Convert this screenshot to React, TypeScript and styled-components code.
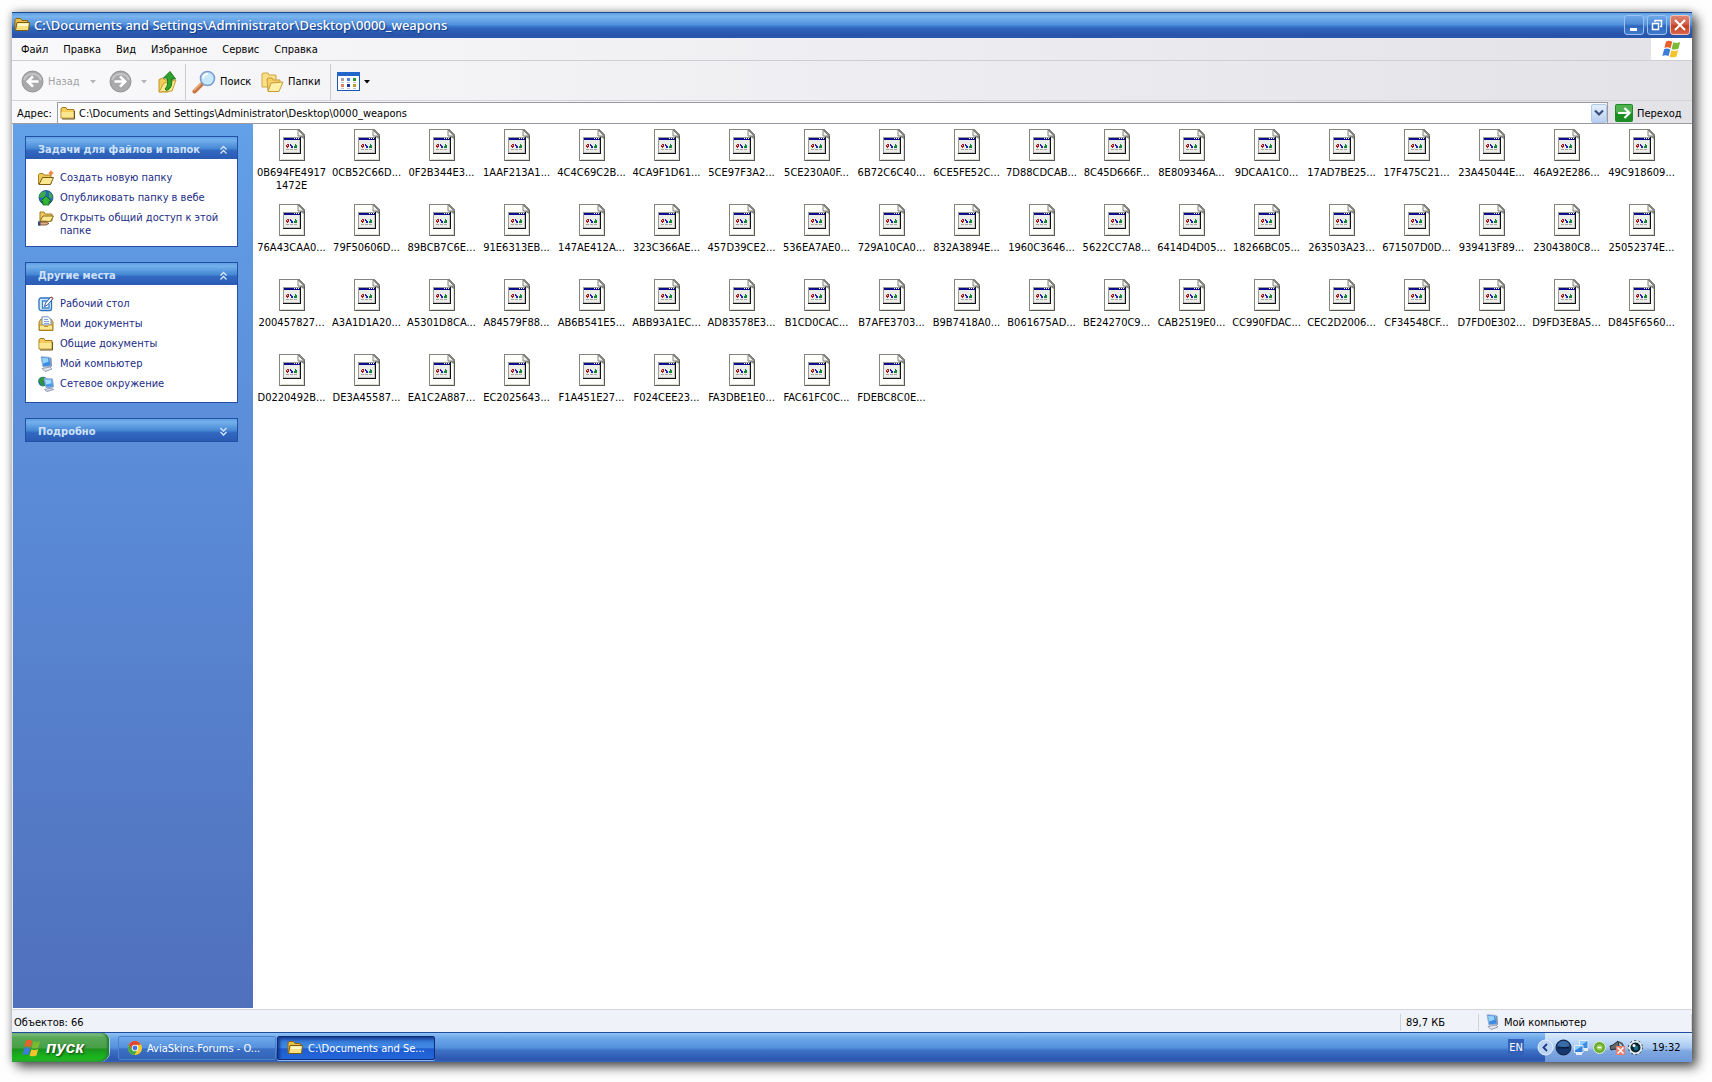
import React from "react";
import styled, { createGlobalStyle } from "styled-components";

const ui = `"DejaVu Sans Condensed", "Noto Sans", sans-serif`;

const GlobalStyle = createGlobalStyle`
  * { box-sizing: border-box; }
  body { margin: 0; background: #fefefe; color: #000; font: 11px/13px ${ui}; }
  button, input { font: inherit; color: inherit; border: 0; padding: 0; background: none; }
  button { cursor: pointer; white-space: nowrap; }
  ul { list-style: none; margin: 0; padding: 0; }
  svg { display: block; flex: none; }
`;

const Page = styled.div`
  min-height: 100vh;
  display: flex;
  padding: 12px 20px 20px 12px;
`;

const Screen = styled.div`
  flex: 1;
  min-width: 0;
  display: flex;
  flex-direction: column;
  background: #fff;
  box-shadow: 0 0 8px rgba(0, 0, 0, 0.3), 5px 5px 11px rgba(0, 0, 0, 0.65);
`;

const TitleBar = styled.header`
  display: flex;
  align-items: center;
  gap: 4px;
  height: 26px;
  padding: 0 2px 2px;
  border-top: 1px solid #1c4a94;
  background: linear-gradient(#5e9fe2 0%, #7ab4ee 14%, #5090dc 48%, #3c7acc 52%, #2f65bc 62%, #2853a8 90%, #2a58ae 100%);
`;

const Title = styled.h1`
  flex: 1;
  min-width: 0;
  margin: 0;
  overflow: hidden;
  white-space: nowrap;
  color: #fff;
  font: 500 13px/20px "Noto Sans", sans-serif;
  text-shadow: 1px 1px 1px #123a86;
`;

const Caption = styled.div`
  display: flex;
  gap: 3px;
`;

const CaptionButton = styled.button<{ $close?: boolean }>`
  display: grid;
  place-items: center;
  width: 20px;
  height: 20px;
  border: 1px solid ${(p) => (p.$close ? "#f2c3b8" : "#9cc2f0")};
  border-radius: 3px;
  background: ${(p) =>
    p.$close
      ? "linear-gradient(#dc8474, #d0604a 45%, #c04028 55%, #d8674c)"
      : "linear-gradient(#6fa8e8, #4c88d4 45%, #2f66bc 55%, #3f7acc)"};
`;

const MenuBar = styled.nav`
  display: flex;
  align-items: center;
  gap: 15px;
  height: 23px;
  padding-left: 9px;
  border-bottom: 1px solid #cfcfd3;
  background: linear-gradient(90deg, #f9f9fb, #e3e2e7);
`;

const MenuLogo = styled.div`
  display: grid;
  place-items: center;
  width: 41px;
  height: 22px;
  margin-left: auto;
  background: #fff;
`;

const ToolBar = styled.div`
  display: flex;
  align-items: center;
  height: 40px;
  padding: 3px 9px 1px;
  border-bottom: 1px solid #d4d4d8;
  background: linear-gradient(90deg, #f9f9fb, #e3e2e7);
`;

const Tool = styled.button<{ $w: number; $off?: boolean }>`
  display: flex;
  align-items: center;
  gap: 4px;
  width: ${(p) => p.$w}px;
  height: 32px;
  color: ${(p) => (p.$off ? "#a2a2a4" : "#000")};
`;

const Divider = styled.span`
  width: 1px;
  height: 36px;
  margin-right: 6px;
  background: #cbcbd0;
`;

const AddressBar = styled.form`
  display: flex;
  align-items: center;
  height: 23px;
  padding: 1px 0 0 5px;
  border-bottom: 1px solid #9a9aa2;
  background: linear-gradient(90deg, #f9f9fb, #e3e2e7);
`;

const AddressLabel = styled.label`
  width: 40px;
  padding-top: 2px;
  white-space: nowrap;
`;

const AddressBox = styled.div`
  flex: 1;
  display: flex;
  align-items: center;
  gap: 3px;
  height: 21px;
  padding: 0 0 0 2px;
  border: 1px solid #9a9aa2;
  border-bottom: 0;
  background: #fff;
`;

const AddressInput = styled.input`
  flex: 1;
  min-width: 0;
  padding-top: 1px;
  outline: 0;
`;

const DropButton = styled.button`
  display: grid;
  place-items: center;
  width: 16px;
  height: 19px;
  border: 1px solid #b2c8ea;
  border-radius: 2px;
  background: linear-gradient(#e4eefc, #b8cff0);
`;

const GoButton = styled.button`
  display: flex;
  align-items: center;
  gap: 4px;
  width: 84px;
  padding: 1px 0 0 7px;
`;

const Content = styled.div`
  flex: 1;
  display: flex;
  padding-bottom: 1px;
`;

const Sidebar = styled.aside`
  display: flex;
  flex-direction: column;
  gap: 15px;
  width: 241px;
  padding: 12px 15px 12px 12px;
  border-left: 1px solid #e6e9f0;
  background: linear-gradient(#62a0e8, #5b8cd8 38%, #5070bc);
`;

const Panel = styled.section`
  border: 1px solid #2450a4;
  background: #fff;
`;

const PanelHead = styled.button`
  display: flex;
  align-items: center;
  justify-content: space-between;
  width: 100%;
  height: 22px;
  padding: 3px 9px 0 12px;
  color: #cfe2fb;
  font-weight: bold;
  background: linear-gradient(#5c9fe4, #74b0ec 14%, #4688d4 52%, #3268c0 62%, #2b5bb4);
`;

const PanelList = styled.ul`
  && {
    display: flex;
    flex-direction: column;
    gap: 4px;
    padding: 11px 8px 10px 12px;
  }
`;

const PanelLink = styled.a`
  display: flex;
  gap: 6px;
  color: #1c2c86;
  text-decoration: none;
  svg { height: 16px; }
  span { padding-top: 1px; line-height: 13px; }
`;

const PanelItem = styled.li<{ $tall?: boolean }>`
  height: ${(p) => (p.$tall ? 26 : 16)}px;
`;

const Files = styled.ul`
  && {
    flex: 1;
    display: grid;
    grid-template-columns: repeat(auto-fill, 75px);
    grid-auto-rows: 75px;
    align-content: start;
    padding: 5px 0 0 1px;
  }
`;

const File = styled.li`
  display: flex;
  flex-direction: column;
  align-items: center;
  gap: 5px;
  text-align: center;
  white-space: pre;
`;

const StatusBar = styled.footer`
  display: flex;
  align-items: center;
  height: 23px;
  padding-top: 2px;
  border-top: 1px solid #d4d6da;
  background: #eff2f8;
`;

const StatusCell = styled.div<{ $w?: number }>`
  display: flex;
  align-items: center;
  gap: 4px;
  height: 17px;
  ${(p) => (p.$w ? `width: ${p.$w}px; padding-left: 5px;` : "flex: 1; padding-left: 2px;")}
  border-right: 1px solid #cfd2d8;
`;

const TaskBar = styled.div`
  display: flex;
  height: 30px;
  border-top: 1px solid #1f4c9c;
  background: linear-gradient(#8fc2f4, #6aa4e8 20%, #5592de 50%, #3d72c6 60%, #2c58b0 90%, #3464b8);
`;

const Start = styled.button`
  display: flex;
  align-items: center;
  gap: 4px;
  width: 97px;
  margin-right: 9px;
  padding-left: 10px;
  border-radius: 0 7px 10px 0;
  color: #fff;
  font: italic bold 17px/20px "Liberation Sans", sans-serif;
  text-shadow: 1px 1px 2px #104010;
  background: linear-gradient(#8cc48c, #58a858 15%, #48a048 50%, #1c9420 56%, #18b81c 85%, #30a830);
  box-shadow: inset -2px 0 2px #2a7a3a, 1px 0 0 #a8d4d0;
`;

const Task = styled.button<{ $active?: boolean }>`
  display: flex;
  align-items: center;
  gap: 5px;
  width: 158px;
  height: 24px;
  margin: 3px 1px 0 0;
  padding-left: 9px;
  border-radius: 2px;
  color: #fff;
  border: 1px solid ${(p) => (p.$active ? "#102c78" : "#4c82cc")};
  background: ${(p) =>
    p.$active
      ? "linear-gradient(#2c68c4, #3c82e0 30%, #4088e4 48%, #1e5cd0 54%, #2468dc)"
      : "linear-gradient(#70aaec, #5490dc 48%, #3a70c4 54%, #3464b8)"};
  ${(p) => p.$active && "box-shadow: inset 2px 2px 3px #163c94, 0 1px 0 #8cb8f0;"}
`;

const Lang = styled.button`
  align-self: center;
  width: 16px;
  height: 17px;
  margin: 0 12px 0 auto;
  color: #fff;
  background: #3360b8;
`;

const Tray = styled.div`
  display: flex;
  align-items: center;
  gap: 1px;
  width: 156px;
  padding-left: 1px;
  background: linear-gradient(#dcecfc, #bcd8f8 30%, #a8c8f0 50%, #80a8e0 62%, #6c98d8) no-repeat 9px 0;
`;

const Clock = styled.time`
  margin-left: 7px;
`;

type G = { w?: number; h?: number };

const FolderIcon = ({ w = 16, h = 16 }: G) => (
  <svg width={w} height={h} viewBox="0 0 16 16" aria-hidden="true">
    <path d="M1 12.500V3l1-1.500h4.500L8 3.500h5.500V6" fill="#e8be48" stroke="#8c6814" />
    <path d="M1.500 13.500 3 5.500h12.500l-1 8z" fill="#fbe080" stroke="#7c5c10" strokeLinejoin="round" />
    <path d="M4 6.500h10.500L14 9H3.500z" fill="#fff8cc" />
  </svg>
);

const SmallFolder = () => (
  <svg width="16" height="16" viewBox="0 0 16 16" aria-hidden="true">
    <path d="M1 13V4l1-1.500h4l1 2h7v8.500z" fill="#f4cc5c" stroke="#a87c1c" />
    <path d="M1.500 7h12v5.500h-12z" fill="#fbe690" />
    <path d="M14.500 6v8H2" fill="none" stroke="#6c5014" />
  </svg>
);

const Flag = ({ s }: { s: number }) => (
  <svg width={s} height={s} viewBox="0 0 20 20" aria-hidden="true">
    <path d="M4 2.500c2-1.200 4-1 6.200.2L8.600 9.300C6.500 8.200 4.500 8 2.400 9z" fill="#e8602c" />
    <path d="M11.200 3.300c2.200 1 4.400 1 7-.3l-1.700 6.600c-2.400 1.200-4.600 1.200-6.900.3z" fill="#7cba34" />
    <path d="M2.100 10.300c2.200-1.100 4.200-.8 6.200.3l-1.700 6.500c-2.100-1.200-4-1.300-6.200-.2z" fill="#3c7cdc" />
    <path d="M9.300 11.200c2.300 1 4.500.9 6.900-.3l-1.700 6.500c-2.300 1.200-4.700 1.200-6.900.3z" fill="#f4c42c" />
  </svg>
);

const Circle = ({ back }: { back?: boolean }) => (
  <svg width="23" height="23" viewBox="0 0 23 23" aria-hidden="true">
    <circle cx="11.500" cy="11.500" r="10.500" fill="#a9a9ab" stroke="#929294" />
    <path d="M3 10a9 9 0 0 1 17 0" fill="none" stroke="#c6c6c8" strokeWidth="2" />
    <path
      d={back ? "M17.500 11.500H7m5-5.200-5.200 5.200 5.200 5.200" : "M5.500 11.500H16m-5-5.200 5.200 5.200-5.200 5.200"}
      fill="none" stroke="#fff" strokeWidth="2.600"
    />
  </svg>
);

const Caret = ({ off }: { off?: boolean }) => (
  <svg width="6" height="4" viewBox="0 0 6 4" aria-hidden="true">
    <path d="M0 0h6L3 3.500z" fill={off ? "#b4b4b6" : "#000"} />
  </svg>
);

const UpIcon = () => (
  <svg width="22" height="24" viewBox="0 0 22 24" aria-hidden="true">
    <path d="M2 22V9.500L6 8l2 2 8-1v9L11 22z" fill="#f0cc58" stroke="#c09828" />
    <path d="M2 22 7 13l12-3-4 11z" fill="#fbe990" stroke="#c8a038" />
    <path d="M9.500 20.500c4-1.500 6-5 5-11.500h4L13 1.500 6.500 8H10c1 5 .8 8-2 11z" fill="#2ea42c" stroke="#187818" />
  </svg>
);

const SearchIcon = () => (
  <svg width="24" height="24" viewBox="0 0 24 24" aria-hidden="true">
    <path d="M2.500 21.500 10 14" stroke="#c87440" strokeWidth="4" strokeLinecap="round" />
    <path d="M2 20.500 9 13.500" stroke="#f0b080" strokeWidth="1.200" />
    <circle cx="15.500" cy="8.500" r="7" fill="#c8e8fc" stroke="#7c9cd0" strokeWidth="1.600" />
    <path d="M11 8a5 5 0 0 1 5-4" stroke="#fff" strokeWidth="2" fill="none" />
  </svg>
);

const FoldersIcon = () => (
  <svg width="23" height="22" viewBox="0 0 23 22" aria-hidden="true">
    <path d="M1 16V3l1-1h5l1 2h7v12z" fill="#fbe088" stroke="#d0a440" />
    <path d="M7 20 6 8l1-1h4l1 2h7v3" fill="#f4d068" stroke="#c89c38" />
    <path d="M7 20.500 10 12l12-1-4 9.500z" fill="#fdf0a8" stroke="#c89c38" />
  </svg>
);

const ViewsIcon = () => (
  <svg width="23" height="19" viewBox="0 0 23 19" aria-hidden="true">
    <rect x=".5" y=".5" width="22" height="18" fill="#fff" stroke="#1c58b8" />
    <path d="M0 0h23v4H0z" fill="#2266cc" />
    {["#a8a0a8", "#4c88d0", "#2c9438", "#e0805c", "#183c9c", "#c0a028"].map((c, i) => (
      <rect key={c} x={4 + (i % 3) * 6} y={i < 3 ? 6 : 12} width="3" height="3" fill={c} />
    ))}
    <path d="M4 10.500h3m3 0h3m3 0h3M4 16.500h3m3 0h3m3 0h3" stroke="#b8c4d4" />
  </svg>
);

const Chevrons = ({ down }: { down?: boolean }) => (
  <svg width="9" height="10" viewBox="0 0 9 10" aria-hidden="true">
    <path
      d={down ? "M1.500 1l3 3 3-3m-6 4 3 3 3-3" : "M1.500 4.500l3-3 3 3m-6 4 3-3 3 3"}
      fill="none" stroke="#d8e8fc" strokeWidth="1.300"
    />
  </svg>
);

const NewFolder = () => (
  <svg width="16" height="16" viewBox="0 0 16 16" aria-hidden="true">
    <path d="M.5 14V4.500l1-1H5l1 1.500h7v9z" fill="#ecc658" stroke="#a88020" />
    <path d="M1 14.500 4.500 7.500h11l-3 7z" fill="#fbe890" stroke="#7c5c18" />
    <path d="M13 0l.8 2.200L16 3l-2.200.8L13 6l-.8-2.200L10 3l2.200-.8z" fill="#f06020" />
    <circle cx="13" cy="3" r="1.800" fill="#f8803c" />
  </svg>
);

const WebIcon = () => (
  <svg width="16" height="16" viewBox="0 0 16 16" aria-hidden="true">
    <circle cx="8" cy="7.500" r="7" fill="#2468b8" stroke="#184878" strokeWidth=".8" />
    <path d="M2 4c2-3 5-3.500 6-2l-1 4-3 2-3-1zM11 2c3 1.500 4 4 3.500 7L11 7z" fill="#3cac48" />
    <path d="M8 6l5.500 5.500H11V15H5v-3.500H2.500z" fill="#34b434" stroke="#0c6c1c" strokeWidth=".8" />
  </svg>
);

const ShareIcon = () => (
  <svg width="16" height="16" viewBox="0 0 16 16" aria-hidden="true">
    <path d="M2 11V2h4l1 2h7v7z" fill="#f0cc60" stroke="#a07c20" />
    <path d="M2 11 5 6h10.500l-3 5.500z" fill="#fbe890" stroke="#8c6c20" />
    <path d="M0 12h8l3 1.500L8 15H0z" fill="#e8b080" stroke="#604020" strokeWidth=".8" />
    <path d="M0 11.500h2.500v4H0z" fill="#384878" />
  </svg>
);

const DesktopIcon = () => (
  <svg width="16" height="16" viewBox="0 0 16 16" aria-hidden="true">
    <rect x="1" y="2" width="12.500" height="12.500" rx="2" fill="#d4ecfc" stroke="#2c70c0" strokeWidth="1.300" />
    <path d="M10 5H4.500v7H11V8" fill="#fff" stroke="#3c84c8" strokeWidth="1.300" />
    <path d="M6.500 10.500 7.500 7l5.500-6 2 1.500-5.500 6.500z" fill="#fff" stroke="#2458a8" />
    <path d="m13 1 2 1.500" stroke="#e05028" strokeWidth="1.500" />
  </svg>
);

const DocsIcon = () => (
  <svg width="16" height="16" viewBox="0 0 16 16" aria-hidden="true">
    <path d="M1 14.500V6l2-3h10l2 3v8.500z" fill="#ecc458" stroke="#a88020" />
    <path d="M4 .8h6.500l2.500 3V9H4z" fill="#f4f9ff" stroke="#6c8cc0" strokeWidth=".9" />
    <path d="M6 3.500h4M6 5.500h5M6 7.500h5" stroke="#80a4d4" />
    <path d="M1.500 9h4l1 1.500h3L10.500 9h4v5h-13z" fill="#fbe890" stroke="#b08828" strokeWidth=".8" />
  </svg>
);

const PcIcon = () => (
  <svg width="16" height="16" viewBox="0 0 16 16" aria-hidden="true">
    <path d="M3 .8l8.500.5L13 10l-8 1z" fill="#3c8ce4" stroke="#9cb4d4" />
    <path d="M4 2l6 .3.500 3.500L5 7.500z" fill="#94d4fc" />
    <path d="M12 1.500l1.500.5.500 8.500-1.500.5z" fill="#7890b0" />
    <path d="M4 12.500 12 11l2 2-7 2.500z" fill="#e4e8f0" stroke="#8088a0" strokeWidth=".8" />
  </svg>
);

const NetIcon = () => (
  <svg width="16" height="16" viewBox="0 0 16 16" aria-hidden="true">
    <circle cx="5" cy="5.500" r="4.800" fill="#2460b8" />
    <path d="M.5 4.500c1-3 4-4.500 6.500-3L5 6l2 3.500-3 1z" fill="#2c9838" />
    <path d="M6 2.500l8.500.5 1 8-7.500.5z" fill="#4c9cec" stroke="#94acd0" />
    <path d="M7 3.500l6 .3.500 3.500L8 8.500z" fill="#a4dcfc" />
    <path d="M6.500 13.500 13.500 12l2 1.500-6.500 2z" fill="#dce0ec" stroke="#7480a0" strokeWidth=".8" />
  </svg>
);

const FileIcon = () => (
  <svg width="26" height="32" viewBox="0 0 26 32" shapeRendering="crispEdges" aria-hidden="true">
    <path d="M0 0h20l6 6v26H0z" fill="#848480" />
    <path d="M1 1h18v6h6v24H1z" fill="#fefefa" />
    <path d="M24 8h1v23H2v-1h22z" fill="#dcdcd4" />
    <path d="M25 7h1v25H1v-1h24z" fill="#585854" />
    <path d="M19 1l6 6h-6z" fill="#f0f0ec" stroke="#848480" shapeRendering="auto" />
    <path d="M20 7h5v3z" fill="#888884" shapeRendering="auto" />
    <path d="M4 8h18v17H4z" fill="#101018" />
    <path d="M4 8h17v16H4z" fill="#9c9c98" />
    <path d="M5 9h15v14H5z" fill="#ecece8" />
    <path d="M20 9h1v15H5v-1h15z" fill="#c4c4c0" />
    <path d="M5 9h16v2H5z" fill="#0c0c8c" />
    <path d="M15 9h1v1h-1zM17 9h1v1h-1zM19 9h1v1h-1z" fill="#fff" />
    <path d="M7 16h1v-1h2v3H9v1H8v-1H7z" fill="#a81818" />
    <path d="M8 16h1v1H8z" fill="#f4c8c0" />
    <path d="M11 15h1v1h1v1h1v2h-2v-2h-1z" fill="#2020b8" />
    <path d="M16 15h1v1h1v3h-3v-2h1z" fill="#108838" />
    <path d="M7 20h3v1H7zM11 20h3v1h-3zM15 20h3v1h-3z" fill="#a4a4a0" />
  </svg>
);

const ChromeIcon = () => (
  <svg width="14" height="14" viewBox="0 0 14 14" aria-hidden="true">
    <circle cx="7" cy="7" r="7" fill="#f8cc2c" />
    <path d="M.9 3.500A7 7 0 0 1 13 3.500L7 4 4 8.500z" fill="#e04434" />
    <path d="M.9 3.500A7 7 0 0 0 6.500 14l3-5.500H4z" fill="#44a848" />
    <circle cx="7" cy="7" r="3.200" fill="#fff" />
    <circle cx="7" cy="7" r="2.400" fill="#3c78e0" />
  </svg>
);

const TrayIcons = () => (
  <>
    <svg width="17" height="17" viewBox="0 0 17 17" aria-hidden="true">
      <circle cx="8.500" cy="8.500" r="7.500" fill="#bcd4f4" stroke="#e4f0fc" />
      <path d="M10 5 6.500 8.500 10 12" fill="none" stroke="#1c3c88" strokeWidth="1.800" />
    </svg>
    <svg width="17" height="17" viewBox="0 0 17 17" aria-hidden="true">
      <circle cx="8.500" cy="8.500" r="7.500" fill="#16386c" stroke="#0c1c40" />
      <path d="M2.500 7a6 5 0 0 1 12 0q-6 2-12 0z" fill="#3c6ca8" />
      <path d="M3 8h11v1.500H3z" fill="#0a1c40" />
    </svg>
    <svg width="17" height="17" viewBox="0 0 17 17" aria-hidden="true">
      <path d="M6.500 1.500h8.500v8H6.500z" fill="#3c8ce4" stroke="#e4ecf8" />
      <path d="M7 2h7.500L7 7z" fill="#8cccfc" />
      <path d="M1.500 6.500H10v7H1.500z" fill="#3480dc" stroke="#e4ecf8" />
      <path d="M2 7h7.500L2 11.500z" fill="#8cccfc" />
      <path d="M3 15h6M11 11h4" stroke="#e8ecf4" strokeWidth="2" />
    </svg>
    <svg width="17" height="17" viewBox="0 0 17 17" aria-hidden="true">
      <circle cx="8.500" cy="8.500" r="6" fill="#6cac34" stroke="#e4f0d4" />
      <circle cx="8.500" cy="8.500" r="3" fill="#94cc50" />
      <path d="M6.500 8.500h4" stroke="#fff" strokeWidth="1.600" />
    </svg>
    <svg width="17" height="17" viewBox="0 0 17 17" aria-hidden="true">
      <path d="M1 7l3-1 5-4 2 10-5-2-4 1z" fill="#686868" stroke="#282828" />
      <path d="M10 3q5 2 4 6" fill="none" stroke="#4c4c4c" strokeWidth="1.500" />
      <rect x="7" y="7" width="9" height="9" fill="#e87c6c" />
      <path d="m8.500 8.500 6 6m0-6-6 6" stroke="#fff" strokeWidth="1.600" />
    </svg>
    <svg width="17" height="17" viewBox="0 0 17 17" aria-hidden="true">
      <circle cx="8.500" cy="8.500" r="7" fill="#e4f0f4" stroke="#303030" strokeDasharray="2 2.500" />
      <circle cx="8.500" cy="8.500" r="5" fill="#082430" />
      <circle cx="9" cy="9" r="2.400" fill="#1c6c84" />
      <circle cx="7" cy="6.500" r="1.500" fill="#fff" />
    </svg>
  </>
);

const path = "C:\\Documents and Settings\\Administrator\\Desktop\\0000_weapons";

const files = (
  "0CB52C66D 0F2B344E3 1AAF213A1 4C4C69C2B 4CA9F1D61 5CE97F3A2 5CE230A0F 6B72C6C40 6CE5FE52C 7D88CDCAB 8C45D666F 8E809346A 9DCAA1C0 17AD7BE25 17F475C21 23A45044E 46A92E286 49C918609 " +
  "76A43CAA0 79F50606D 89BCB7C6E 91E6313EB 147AE412A 323C366AE 457D39CE2 536EA7AE0 729A10CA0 832A3894E 1960C3646 5622CC7A8 6414D4D05 18266BC05 263503A23 671507D0D 939413F89 2304380C8 25052374E " +
  "200457827 A3A1D1A20 A5301D8CA A84579F88 AB6B541E5 ABB93A1EC AD83578E3 B1CD0CAC B7AFE3703 B9B7418A0 B061675AD BE24270C9 CAB2519E0 CC990FDAC CEC2D2006 CF34548CF D7FD0E302 D9FD3E8A5 D845F6560 " +
  "D0220492B DE3A45587 EA1C2A887 EC2025643 F1A451E27 F024CEE23 FA3DBE1E0 FAC61FC0C FDEBC8C0E"
).split(" ");
const names = ["0B694FE4917\n1472E", ...files.map((f) => f + "...")];

const groups = [
  {
    title: "Задачи для файлов и папок",
    items: [
      { text: "Создать новую папку", Icon: NewFolder },
      { text: "Опубликовать папку в вебе", Icon: WebIcon },
      { text: "Открыть общий доступ к этой папке", Icon: ShareIcon, tall: true },
    ],
  },
  {
    title: "Другие места",
    items: [
      { text: "Рабочий стол", Icon: DesktopIcon },
      { text: "Мои документы", Icon: DocsIcon },
      { text: "Общие документы", Icon: SmallFolder },
      { text: "Мой компьютер", Icon: PcIcon },
      { text: "Сетевое окружение", Icon: NetIcon },
    ],
  },
  { title: "Подробно", items: [] },
] as { title: string; items: { text: string; Icon: React.FC; tall?: boolean }[] }[];

export default function App() {
  return (
    <Page>
      <GlobalStyle />
      <Screen>
        <TitleBar>
          <FolderIcon />
          <Title>{path}</Title>
          <Caption>
            <CaptionButton aria-label="Свернуть">
              <svg width="14" height="14"><path d="M3 10h7v3H3z" fill="#fff" /></svg>
            </CaptionButton>
            <CaptionButton aria-label="Восстановить">
              <svg width="14" height="14">
                <path d="M5 4V2.500h6.500v6H10M2.500 5.500h6v6h-6z" fill="none" stroke="#fff" strokeWidth="1.500" />
              </svg>
            </CaptionButton>
            <CaptionButton $close aria-label="Закрыть">
              <svg width="14" height="14"><path d="m2 2 10 10m0-10L2 12" stroke="#fff" strokeWidth="2" /></svg>
            </CaptionButton>
          </Caption>
        </TitleBar>

        <MenuBar>
          {["Файл", "Правка", "Вид", "Избранное", "Сервис", "Справка"].map((m) => (
            <button key={m}>{m}</button>
          ))}
          <MenuLogo><Flag s={20} /></MenuLogo>
        </MenuBar>

        <ToolBar>
          <Tool $w={69} $off><Circle back />Назад</Tool>
          <Tool $w={19} $off aria-label="Список назад"><Caret off /></Tool>
          <Tool $w={32} $off aria-label="Вперед"><Circle /></Tool>
          <Tool $w={16} $off aria-label="Список вперед"><Caret off /></Tool>
          <Tool $w={28} aria-label="Вверх"><UpIcon /></Tool>
          <Divider />
          <Tool $w={69}><SearchIcon />Поиск</Tool>
          <Tool $w={69}><FoldersIcon />Папки</Tool>
          <Divider />
          <Tool $w={36} aria-label="Вид"><ViewsIcon /><Caret /></Tool>
        </ToolBar>

        <AddressBar onSubmit={(e) => e.preventDefault()}>
          <AddressLabel htmlFor="address">Адрес:</AddressLabel>
          <AddressBox>
            <SmallFolder />
            <AddressInput id="address" defaultValue={path} />
            <DropButton type="button" aria-label="Показать список">
              <svg width="10" height="8"><path d="m1 1.500 4 4 4-4" fill="none" stroke="#38507c" strokeWidth="2.200" /></svg>
            </DropButton>
          </AddressBox>
          <GoButton>
            <svg width="18" height="18" viewBox="0 0 18 18" aria-hidden="true">
              <rect width="18" height="18" rx="2" fill="#1c8c24" />
              <rect x="1" y="1" width="16" height="8" rx="1" fill="#50b050" />
              <path d="M3 9h11M9.500 4l5 5-5 5" fill="none" stroke="#fff" strokeWidth="2.200" />
            </svg>
            Переход
          </GoButton>
        </AddressBar>

        <Content>
          <Sidebar>
            {groups.map((g) => (
              <Panel key={g.title}>
                <PanelHead>
                  {g.title}
                  <Chevrons down={!g.items.length} />
                </PanelHead>
                {g.items.length > 0 && (
                  <PanelList>
                    {g.items.map(({ text, Icon, tall }) => (
                      <PanelItem key={text} $tall={tall}>
                        <PanelLink href="#"><Icon /><span>{text}</span></PanelLink>
                      </PanelItem>
                    ))}
                  </PanelList>
                )}
              </Panel>
            ))}
          </Sidebar>
          <Files>
            {names.map((n) => (
              <File key={n}><FileIcon />{n}</File>
            ))}
          </Files>
        </Content>

        <StatusBar>
          <StatusCell>Объектов: 66</StatusCell>
          <StatusCell $w={78}>89,7 КБ</StatusCell>
          <StatusCell $w={213}><PcIcon />Мой компьютер</StatusCell>
        </StatusBar>

        <TaskBar>
          <Start><Flag s={20} />пуск</Start>
          <Task><ChromeIcon />AviaSkins.Forums - O...</Task>
          <Task $active><FolderIcon />C:\Documents and Se...</Task>
          <Lang>EN</Lang>
          <Tray>
            <TrayIcons />
            <Clock>19:32</Clock>
          </Tray>
        </TaskBar>
      </Screen>
    </Page>
  );
}
